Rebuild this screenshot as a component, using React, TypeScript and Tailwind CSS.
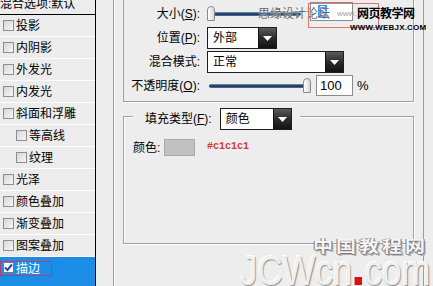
import React from "react";

type Effect = {
  label: string;
  indent?: boolean;
  checked?: boolean;
  selected?: boolean;
};

const effects: Effect[] = [
  { label: "投影" },
  { label: "内阴影" },
  { label: "外发光" },
  { label: "内发光" },
  { label: "斜面和浮雕" },
  { label: "等高线", indent: true },
  { label: "纹理", indent: true },
  { label: "光泽" },
  { label: "颜色叠加" },
  { label: "渐变叠加" },
  { label: "图案叠加" },
  { label: "描边", checked: true, selected: true },
];

function CheckBox({ checked }: { checked?: boolean }) {
  return (
    <span
      className={`flex w-[11px] h-[11px] shrink-0 items-center justify-center border ${
        checked
          ? "border-[#7a7a7a] bg-white"
          : "border-[#8e8e8e] bg-linear-to-br from-[#d6d6d6] to-[#f7f7f7]"
      }`}
    >
      {checked && (
        <svg width="9" height="9" viewBox="0 0 9 9">
          <path d="M1 4.5 L3.5 7 L8 1.5" stroke="#2f3fb0" strokeWidth="2" fill="none" />
        </svg>
      )}
    </span>
  );
}

function DropButton() {
  return (
    <span className="flex w-[18px] h-full shrink-0 items-center justify-center border-l border-[#111] bg-linear-to-b from-[#5c5c5c] via-[#2c2c2c] to-[#141414]">
      <svg width="9" height="5" viewBox="0 0 9 5">
        <path d="M0 0 H9 L4.5 5 Z" fill="#fff" />
      </svg>
    </span>
  );
}

function Slider({ thumbLeft, width }: { thumbLeft: string; width: string }) {
  return (
    <div className={`relative h-[18px] ${width}`}>
      <div className="absolute left-[2px] right-[4px] top-[7px] h-[4px] rounded-full bg-linear-to-b from-[#7f9cc0] via-[#0e2c52] to-[#5a7aa2]" />
      <div
        className={`absolute top-[1px] ${thumbLeft} w-[8px] h-[15px] rounded-t-[4px] rounded-b-[1px] border border-[#8a8a8a] bg-linear-to-r from-white to-[#d8d8d8]`}
      />
    </div>
  );
}

export default function App() {
  return (
    <div className="relative w-[433px] h-[286px] overflow-hidden bg-[#ededed] flex font-['Liberation_Sans','Noto_Sans_CJK_SC',sans-serif] text-[12px] text-black">
      {/* Styles list */}
      <div className="w-[96px] shrink-0 flex flex-col border-r border-black bg-[#ececec]">
        <div className="h-[15px] shrink-0 border-b border-black overflow-hidden">
          <div className="-mt-[3px] leading-[14px] whitespace-nowrap">混合选项:默认</div>
        </div>
        {effects.map((e) => (
          <div
            key={e.label}
            className={`flex items-center shrink-0 ${
              e.selected ? "flex-1 bg-[#1b8de6] text-white items-start pt-[5px]" : "h-[22px] border-b border-white"
            } ${e.indent ? "pl-[16px] gap-[2px]" : "pl-[3px] gap-[2px]"}`}
          >
            <CheckBox checked={e.checked} />
            <span className="leading-[14px] whitespace-nowrap">{e.label}</span>
          </div>
        ))}
      </div>

      {/* Options panel */}
      <div className="flex-1 pl-[17px]">
        <div className="w-[311px] h-full border-x border-[#9c9c9c] px-[9px] shadow-[inset_1px_0_0_#fff]">
          {/* Structure group (top cut off) */}
          <div className="border-x border-b border-[#a2a2a2] pt-[2px] pb-[4px] shadow-[1px_1px_0_#fff]">
            <div className="flex items-center h-[24px]">
              <span className="w-[76px] text-right leading-[14px]">
                大小(<u>S</u>):
              </span>
              <div className="ml-[7px]">
                <Slider width="w-[98px]" thumbLeft="left-0" />
              </div>
              <div className="ml-[5px] -mt-[6px] w-[43px] h-[19px] bg-white border border-[#8a8a8a] flex items-center pl-[7px]">
                <span className="bg-[#2f8fef] text-white leading-[13px] px-[1px]">5</span>
              </div>
            </div>
            <div className="flex items-center h-[24px]">
              <span className="w-[76px] text-right leading-[14px]">
                位置(<u>P</u>):
              </span>
              <div className="ml-[7px] flex h-[22px] w-[70px] bg-white border border-[#1e1e1e]">
                <span className="flex-1 pl-[5px] leading-[20px]">外部</span>
                <DropButton />
              </div>
            </div>
            <div className="flex items-center h-[24px]">
              <span className="w-[76px] text-right leading-[14px]">混合模式:</span>
              <div className="ml-[7px] flex h-[22px] w-[137px] bg-white border border-[#1e1e1e]">
                <span className="flex-1 pl-[5px] leading-[20px]">正常</span>
                <DropButton />
              </div>
            </div>
            <div className="flex items-center h-[23px]">
              <span className="w-[76px] text-right leading-[14px] whitespace-nowrap">
                不透明度(<u>O</u>):
              </span>
              <div className="ml-[7px]">
                <Slider width="w-[106px]" thumbLeft="left-[96px]" />
              </div>
              <div className="ml-[3px] w-[37px] h-[21px] bg-white border border-[#8a8a8a] flex items-center pl-[3px]">
                <span className="text-[13px] leading-[15px]">100</span>
              </div>
              <span className="ml-[4px] text-[13px] leading-[15px]">%</span>
            </div>
          </div>

          {/* Fill group */}
          <div className="mt-[14px] h-[128px] border border-[#a2a2a2] shadow-[inset_1px_1px_0_#fff,1px_1px_0_#fff]">
            <div className="-mt-[9px] ml-[9px] w-fit flex items-center bg-[#ededed] pl-[12px] pr-[8px]">
              <span className="leading-[14px] whitespace-nowrap">
                填充类型(<u>F</u>):
              </span>
              <div className="ml-[8px] flex h-[22px] w-[72px] bg-white border border-[#1e1e1e]">
                <span className="flex-1 pl-[5px] leading-[20px]">颜色</span>
                <DropButton />
              </div>
            </div>
            <div className="mt-[9px] pl-[9px] flex items-center h-[17px]">
              <span className="w-[31px] leading-[14px]">颜色:</span>
              <span className="w-[31px] h-[17px] bg-[#c1c1c1] border border-[#a8a8a8]" />
              <span className="ml-[12px] -mt-[3px] font-['Liberation_Mono',monospace] font-bold text-[10px] text-[#d23a3a]">
                #c1c1c1
              </span>
            </div>
          </div>
        </div>
      </div>

      {/* Watermarks and annotations laid over the dialog */}
      <div className="absolute left-[258px] top-[7px] leading-[14px] text-[#666] [text-shadow:0_0_2px_#fff]">
        思缘设计论坛
      </div>
      <div className="absolute left-[308px] top-[3px] w-[71px] h-[25px] border border-[#e27272]" />
      <div className="absolute left-[337px] top-[9px] text-[8px] leading-[10px] text-[#a0a0a0]">www.</div>
      <div className="absolute left-[357px] top-[7px] text-[12px] leading-[14px] font-bold tracking-[-0.5px]">
        网页教学网
      </div>
      <div className="absolute left-[350px] top-[23px] text-[8px] leading-[9px] font-bold tracking-[0.2px]">
        WWW.WEBJX.COM
      </div>
      <div className="absolute left-0 top-[261px] w-[52px] h-[15px] border border-[#b0407a]" />

      <div className="absolute left-[313px] top-[238px] origin-top scale-y-[0.8] text-[20px] leading-[22px] font-bold tracking-[3px] text-[#f4f4f4] [text-shadow:1px_0_0_#7a7a7a,-1px_0_0_#7a7a7a,0_1px_0_#7a7a7a,0_-1px_0_#7a7a7a,2px_2px_0_#b0b0b0]">
        中国教程网
      </div>
      <div className="absolute left-[240px] top-[250px] origin-top-left scale-x-[0.83] flex items-baseline text-[42px] leading-[42px] text-[#f0f0f0] font-['Liberation_Sans',sans-serif] [text-shadow:1px_1px_1px_#8a8a8a,-1px_-1px_0_#fff]">
        <span>JCWcn</span>
        <span className="mx-[3px] w-[9px] h-[8px] bg-[#d81010]" />
        <span>com</span>
      </div>
    </div>
  );
}
